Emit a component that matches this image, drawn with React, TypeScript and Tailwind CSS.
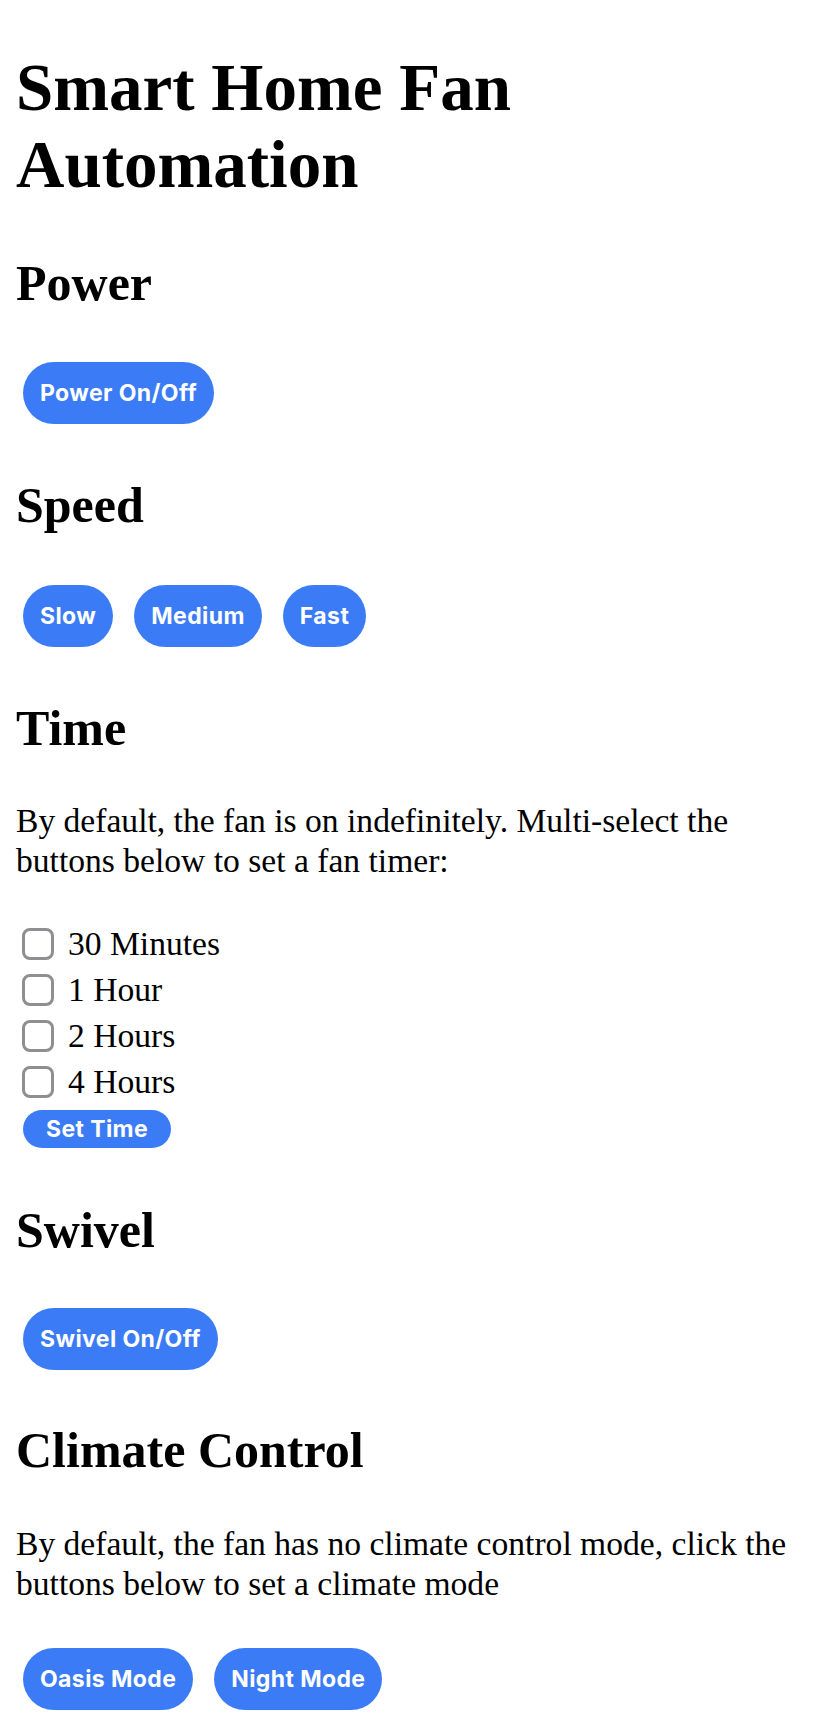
import { useState } from "react";

// Bloque de botones azules en forma de píldora.
function PillButton({ label }: { label: string }) {
  return (
    <button
      type="button"
      className="inline-flex h-[62px] items-center justify-center rounded-full bg-[#3b7cf6] px-[17px] font-['Inter',sans-serif] text-[23px] font-bold tracking-[0.4px] text-white"
    >
      {label}
    </button>
  );
}

function SectionHeading({ children, className }: { children: React.ReactNode; className: string }) {
  return (
    <h2 className={`text-[50px] leading-[58px] font-bold ${className}`}>{children}</h2>
  );
}

const timerOptions = ["30 Minutes", "1 Hour", "2 Hours", "4 Hours"];

export default function App() {
  const [checked, setChecked] = useState<string[]>([]);

  const toggle = (option: string) => {
    setChecked((prev) =>
      prev.includes(option) ? prev.filter((o) => o !== option) : [...prev, option],
    );
  };

  return (
    <div className="min-h-[1734px] bg-white px-4 font-['Liberation_Serif',serif] text-black">
      <h1 className="pt-[49px] text-[67px] leading-[77px] font-bold">Smart Home Fan Automation</h1>

      {/* Power */}
      <SectionHeading className="mt-[51px]">Power</SectionHeading>
      <div className="mt-[50px] ml-[7px] flex">
        <PillButton label="Power On/Off" />
      </div>

      {/* Speed */}
      <SectionHeading className="mt-[52px]">Speed</SectionHeading>
      <div className="mt-[51px] ml-[7px] flex gap-[21px]">
        <PillButton label="Slow" />
        <PillButton label="Medium" />
        <PillButton label="Fast" />
      </div>

      {/* Time */}
      <SectionHeading className="mt-[52px]">Time</SectionHeading>
      <p className="mt-[44px] text-[33.6px] leading-[40px]">
        By default, the fan is on indefinitely. Multi-select the buttons below to set a fan timer:
      </p>
      <div className="mt-[40px] flex flex-col">
        {timerOptions.map((option) => (
          <label key={option} className="flex h-[46px] items-center text-[33.6px] leading-[46px]">
            <span
              onClick={() => toggle(option)}
              className={`ml-[6px] mr-[14px] h-[32px] w-[32px] rounded-[8px] border-[3px] border-[#8e8e93] ${
                checked.includes(option) ? "bg-[#3b7cf6]" : "bg-white"
              }`}
            />
            {option}
          </label>
        ))}
      </div>
      <div className="mt-[5px] ml-[7px] flex">
        <button
          type="button"
          className="inline-flex h-[38px] items-center rounded-full bg-[#3b7cf6] px-[23px] font-['Inter',sans-serif] text-[23px] font-bold tracking-[0.4px] text-white"
        >
          Set Time
        </button>
      </div>

      {/* Swivel */}
      <SectionHeading className="mt-[53px]">Swivel</SectionHeading>
      <div className="mt-[49px] ml-[7px] flex">
        <PillButton label="Swivel On/Off" />
      </div>

      {/* Climate Control */}
      <SectionHeading className="mt-[51px]">Climate Control</SectionHeading>
      <p className="mt-[45px] text-[33.6px] leading-[40px]">
        By default, the fan has no climate control mode, click the buttons below to set a climate mode
      </p>
      <div className="mt-[44px] ml-[7px] flex gap-[21px]">
        <PillButton label="Oasis Mode" />
        <PillButton label="Night Mode" />
      </div>
    </div>
  );
}
